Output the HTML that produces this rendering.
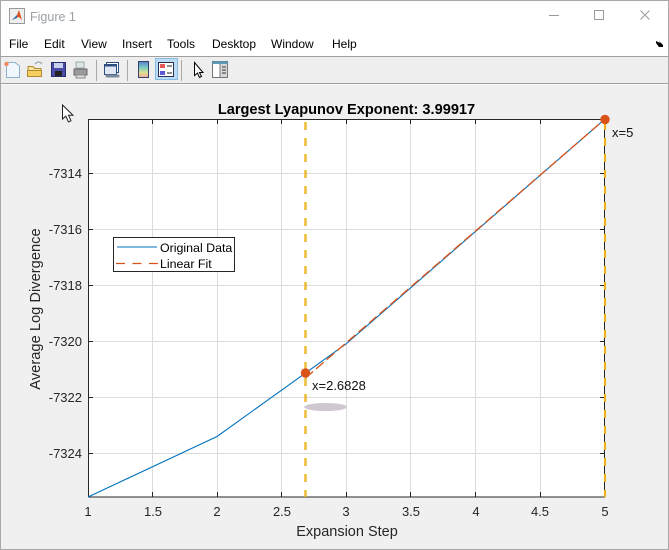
<!DOCTYPE html>
<html>
<head>
<meta charset="utf-8">
<style>
html,body{margin:0;padding:0;width:669px;height:550px;overflow:hidden;background:#f0f0f0}
svg{display:block}
text{font-family:"Liberation Sans",sans-serif;fill:#262626}
.t{font-size:13px;text-anchor:middle}
.y{font-size:13px;text-anchor:end}
.m{font-size:12px;fill:#000}
</style>
</head>
<body>
<svg width="669" height="550" viewBox="0 0 669 550" xmlns="http://www.w3.org/2000/svg">
<!-- window -->
<rect width="669" height="550" fill="#f0f0f0"/>
<rect x="0" y="0" width="669" height="56" fill="#fff"/>
<rect x="0" y="56" width="669" height="1" fill="#a0a0a0"/>
<rect x="0" y="57" width="669" height="26" fill="#eeeeee"/>
<rect x="0" y="83" width="669" height="1" fill="#a0a0a0"/>
<rect x="0" y="84" width="669" height="1" fill="#fafafa"/>
<rect x="0" y="0" width="669" height="1" fill="#a8a8a8"/>
<rect x="0" y="0" width="1" height="550" fill="#a8a8a8"/>
<rect x="668" y="0" width="1" height="550" fill="#a8a8a8"/>
<rect x="0" y="549" width="669" height="1" fill="#a8a8a8"/>

<!-- title -->
<rect x="9.5" y="8.5" width="15" height="15" fill="#eee" stroke="#9a9a9a"/>
<path d="M12 20 L17 15 L19 10 L22 20 L19 17 L16 18 Z" fill="#d9541e"/>
<path d="M12 20 L17 15 L17 18 Z" fill="#2a6fb0"/>
<text x="30" y="21" style="font-size:12.5px;fill:#9aa0a6">Figure 1</text>
<path d="M549 15.5H559" stroke="#9a9a9a" stroke-width="1"/>
<rect x="594.5" y="10.5" width="9" height="9" fill="none" stroke="#9a9a9a"/>
<path d="M640.5 10.5L649.5 19.5M649.5 10.5L640.5 19.5" stroke="#9a9a9a"/>

<!-- menu -->
<text class="m" x="9" y="48">File</text>
<text class="m" x="44" y="48">Edit</text>
<text class="m" x="81" y="48">View</text>
<text class="m" x="122" y="48">Insert</text>
<text class="m" x="167" y="48">Tools</text>
<text class="m" x="212" y="48">Desktop</text>
<text class="m" x="271" y="48">Window</text>
<text class="m" x="332" y="48">Help</text>
<path d="M656 41L660 43L659 41L663 45V47H659L656 43Z" fill="#000"/>

<!-- toolbar -->
<path d="M6.5 62.5H15L19.5 66V77.5H6.5Z" fill="#f0f7ff" stroke="#8fb0d0"/>
<circle cx="6.5" cy="64" r="2.2" fill="#f08a5a"/>
<path d="M27.5 70.5H41.5V76.5H27.5Z" fill="#f5cf60" stroke="#b08a30"/>
<path d="M28 70V66.500H33L35 68.500H41V70" fill="#f9e39a" stroke="#b08a30"/>
<path d="M35 64Q39 60 42 64" fill="none" stroke="#8a9aaa"/>
<rect x="51.5" y="62.5" width="14" height="14" fill="#4a4ca8" stroke="#2a2c70"/>
<rect x="54" y="63" width="9" height="5" fill="#c8d0f0"/>
<rect x="55" y="71" width="7" height="5" fill="#222"/>
<path d="M76 62H84V68H76Z" fill="#dfe6ea" stroke="#9aa"/>
<path d="M74 69H87V75H74Z" fill="#9a9a9a" stroke="#666"/>
<path d="M76 75H85V78H76Z" fill="#ddd" stroke="#888"/>
<rect x="96" y="60" width="1" height="21" fill="#a8a8a8"/>
<rect x="106.500" y="62.5" width="12" height="10" fill="#fff" stroke="#2d4f80"/>
<rect x="104.500" y="64.5" width="12" height="10" fill="#e0e8f4" stroke="#2d4f80"/>
<rect x="104.500" y="64.5" width="12" height="2" fill="#2d4f80"/>
<path d="M107 76H112M113 76H118" stroke="#7a8a9a" stroke-width="3" stroke-linecap="round"/>
<rect x="127" y="60" width="1" height="21" fill="#a8a8a8"/>
<defs><linearGradient id="cb" x1="0" y1="0" x2="0" y2="1"><stop offset="0" stop-color="#5a7fd0"/><stop offset=".4" stop-color="#7fd0c0"/><stop offset=".7" stop-color="#e0e090"/><stop offset="1" stop-color="#f0a8a0"/></linearGradient></defs>
<rect x="138.5" y="61.5" width="10" height="16" fill="url(#cb)" stroke="#33406a"/>
<rect x="155.5" y="58.5" width="22" height="21" fill="#bcdcf4" stroke="#86bce4"/>
<rect x="158.5" y="62.5" width="15" height="14" fill="#fff" stroke="#2a3050"/>
<rect x="160" y="64" width="5" height="4" fill="#e85a5a"/>
<rect x="160" y="71" width="5" height="4" fill="#5a5ad8"/>
<path d="M167 66H172M167 73H172" stroke="#222"/>
<rect x="181" y="60" width="1" height="21" fill="#a8a8a8"/>
<path d="M194.5 62.5V75.5L197.5 73L199.5 77.5L201.5 76.5L199.5 72.5H203Z" fill="#fff" stroke="#000"/>
<rect x="212.5" y="61.5" width="15" height="16" fill="#fff" stroke="#70767c"/>
<rect x="212.5" y="61.5" width="15" height="2.5" fill="#5a9ab8"/>
<rect x="220" y="64" width="7" height="13" fill="#d8d8d8"/>
<path d="M220 64V77" stroke="#70767c"/>
<path d="M222 67H226M222 70H226M222 73H226" stroke="#333"/>

<!-- plot area -->
<rect x="88" y="119" width="517" height="378" fill="#fff"/>
<g stroke="#dcdcdc" stroke-width="1">
<path d="M152.5 119V497M217.5 119V497M281.5 119V497M346.5 119V497M410.5 119V497M475.5 119V497M540.5 119V497"/>
<path d="M88 173.5H605M88 229.5H605M88 285.5H605M88 341.5H605M88 397.5H605M88 453.5H605"/>
</g>
<g stroke="#262626" stroke-width="1">
<path d="M152.5 497V492M217.5 497V492M281.5 497V492M346.5 497V492M410.5 497V492M475.5 497V492M540.5 497V492"/>
<path d="M152.5 119V124M217.5 119V124M281.5 119V124M346.5 119V124M410.5 119V124M475.5 119V124M540.5 119V124"/>
<path d="M88 173.5H93M88 229.5H93M88 285.5H93M88 341.5H93M88 397.5H93M88 453.5H93"/>
<path d="M605 173.5H600M605 229.5H600M605 285.5H600M605 341.5H600M605 397.5H600M605 453.5H600"/>
</g>
<rect x="88.5" y="119.500" width="516" height="377.5" fill="none" stroke="#262626" stroke-width="1"/>

<!-- text shadow blob -->
<ellipse cx="325.5" cy="407" rx="21.5" ry="4" fill="#d0c8d0"/>

<!-- data -->
<path d="M88 497L217 436.5L346 344L605 119" fill="none" stroke="#0072bd" stroke-width="1.1"/>
<path d="M305.5 378L605 119" fill="none" stroke="#d95319" stroke-width="1.3" stroke-dasharray="10 4"/>
<!-- vertical -->
<path d="M305.5 122V497" fill="none" stroke="#edb120" stroke-width="2.6" stroke-dasharray="8 8" opacity=".85"/>
<path d="M605 122V497" fill="none" stroke="#edb120" stroke-width="2.2" stroke-dasharray="8 8"/>
<circle cx="305.5" cy="373" r="4.7" fill="#d95319"/>
<circle cx="605" cy="119.500" r="4.7" fill="#d95319"/>
<text x="612" y="137" style="font-size:13px;fill:#111">x=5</text>
<text x="312" y="390" style="font-size:13px;fill:#111">x=2.6828</text>

<!-- title -->
<text x="346.500" y="114" style="font-size:14.6px;font-weight:bold;text-anchor:middle;fill:#000">Largest Lyapunov Exponent: 3.99917</text>

<!-- tick labels -->
<text class="t" x="88" y="516">1</text>
<text class="t" x="153" y="516">1.5</text>
<text class="t" x="217" y="516">2</text>
<text class="t" x="282" y="516">2.5</text>
<text class="t" x="346" y="516">3</text>
<text class="t" x="411" y="516">3.5</text>
<text class="t" x="476" y="516">4</text>
<text class="t" x="540" y="516">4.5</text>
<text class="t" x="605" y="516">5</text>
<text class="y" x="82" y="178">-7314</text>
<text class="y" x="82" y="234">-7316</text>
<text class="y" x="82" y="290">-7318</text>
<text class="y" x="82" y="346">-7320</text>
<text class="y" x="82" y="402">-7322</text>
<text class="y" x="82" y="458">-7324</text>
<text x="347" y="536" style="font-size:14.5px;text-anchor:middle">Expansion Step</text>
<text transform="translate(40 309) rotate(-90)" style="font-size:14.7px;text-anchor:middle">Average Log Divergence</text>

<!-- legend -->
<rect x="113.5" y="237.5" width="121" height="34" fill="#fff" stroke="#262626"/>
<path d="M117 247H157" stroke="#0072bd" stroke-width="1.1"/>
<path d="M116 263.5H158" stroke="#d95319" stroke-width="1.3" stroke-dasharray="9 7.500"/>
<text x="160" y="252" style="font-size:12.4px;fill:#000">Original Data</text>
<text x="160" y="268" style="font-size:12.4px;fill:#000">Linear Fit</text>

<!-- cursor -->
<path d="M62.5 105V119L65.800 116.200L68.500 122L71 120.800L68.500 115.300H73Z" fill="#fff" stroke="#222"/>
</svg>
</body>
</html>
